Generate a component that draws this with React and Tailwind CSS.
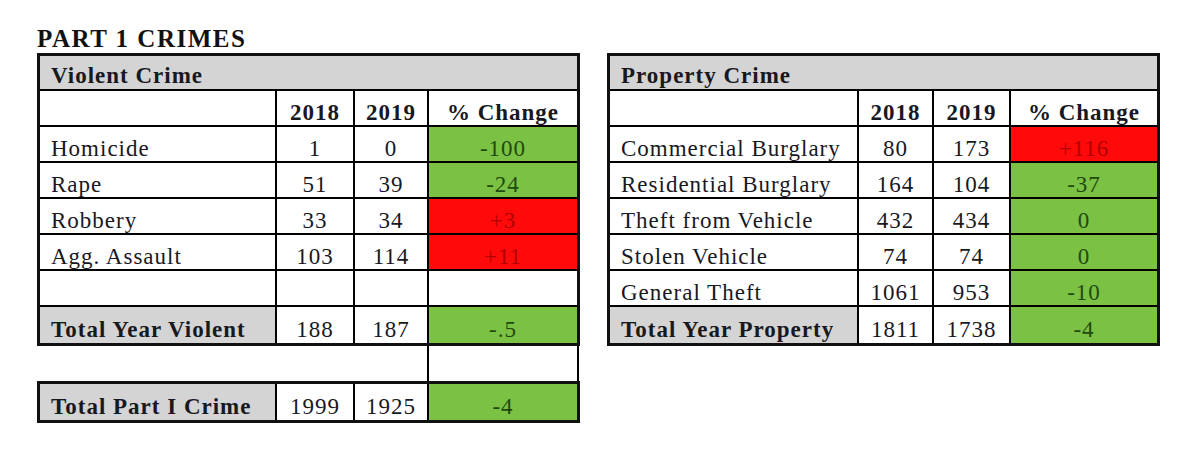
const violent = [
  { name: "Homicide", a: "1", b: "0", change: "-100", up: false },
  { name: "Rape", a: "51", b: "39", change: "-24", up: false },
  { name: "Robbery", a: "33", b: "34", change: "+3", up: true },
  { name: "Agg. Assault", a: "103", b: "114", change: "+11", up: true },
  { name: "", a: "", b: "", change: "", up: null },
];

const property = [
  { name: "Commercial Burglary", a: "80", b: "173", change: "+116", up: true },
  { name: "Residential Burglary", a: "164", b: "104", change: "-37", up: false },
  { name: "Theft from Vehicle", a: "432", b: "434", change: "0", up: false },
  { name: "Stolen Vehicle", a: "74", b: "74", change: "0", up: false },
  { name: "General Theft", a: "1061", b: "953", change: "-10", up: false },
];

function Cell({ children, className = "", last, bottom }) {
  return (
    <div
      className={`h-[36px] flex items-center pt-[8px] leading-none border-black ${last ? "" : "border-r-2"} ${bottom ? "h-[34px]" : "border-b-2"} ${className}`}
    >
      {children}
    </div>
  );
}

function changeClass(up) {
  if (up === true) return "justify-center bg-[#ff0a0a] text-[#b00000]";
  if (up === false) return "justify-center bg-[#7bc143] text-[#1f4a0f]";
  return "justify-center bg-white";
}

function CrimeTable({ title, cols, rows, total }) {
  return (
    <div className={`grid ${cols} border-[3px] border-[#111] bg-white`}>
      <div className="col-span-4 h-[35px] flex items-center pt-[8px] pl-[11px] bg-[#d4d4d4] border-b-2 border-black font-bold">
        {title}
      </div>

      {/* year header */}
      <Cell />
      <Cell className="justify-center font-bold">2018</Cell>
      <Cell className="justify-center font-bold">2019</Cell>
      <Cell className="justify-center font-bold" last>
        % Change
      </Cell>

      {rows.map((r, i) => (
        <div key={i} className="contents">
          <Cell className="pl-[11px]">{r.name}</Cell>
          <Cell className="justify-center">{r.a}</Cell>
          <Cell className="justify-center">{r.b}</Cell>
          <Cell className={changeClass(r.up)} last>
            {r.change}
          </Cell>
        </div>
      ))}

      {/* total */}
      <Cell className="pl-[11px] bg-[#d4d4d4] font-bold" bottom>
        {total.name}
      </Cell>
      <Cell className="justify-center" bottom>
        {total.a}
      </Cell>
      <Cell className="justify-center" bottom>
        {total.b}
      </Cell>
      <Cell className={changeClass(false)} last bottom>
        {total.change}
      </Cell>
    </div>
  );
}

export default function App() {
  return (
    <main
      className="w-[1200px] h-[455px] bg-white pt-[26px] pl-[37px] text-[23px] tracking-[1px] text-[#18181f]"
      style={{ fontFamily: '"Liberation Serif", "Times New Roman", serif' }}
    >
      <h1 className="text-[25px] leading-[25px] font-bold tracking-[1.5px] mb-[2px] text-[#111]">PART 1 CRIMES</h1>

      <div className="flex items-start gap-[27px]">
        {/* violent crime column */}
        <div className="w-[543px] flex flex-col">
          <CrimeTable
            title="Violent Crime"
            cols="grid-cols-[237px_78px_74px_148px]"
            rows={violent}
            total={{ name: "Total Year Violent", a: "188", b: "187", change: "-.5" }}
          />
          <div className="ml-[390px] w-[152px] h-[35px] border-x-2 border-black" />
          <div className="grid grid-cols-[237px_78px_74px_148px] border-[3px] border-[#111]">
            <Cell className="pl-[11px] bg-[#d4d4d4] font-bold" bottom>
              Total Part I Crime
            </Cell>
            <Cell className="justify-center" bottom>
              1999
            </Cell>
            <Cell className="justify-center" bottom>
              1925
            </Cell>
            <Cell className={changeClass(false)} last bottom>
              -4
            </Cell>
          </div>
        </div>

        {/* property crime */}
        <div className="w-[553px]">
          <CrimeTable
            title="Property Crime"
            cols="grid-cols-[249px_75px_77px_146px]"
            rows={property}
            total={{ name: "Total Year Property", a: "1811", b: "1738", change: "-4" }}
          />
        </div>
      </div>
    </main>
  );
}
